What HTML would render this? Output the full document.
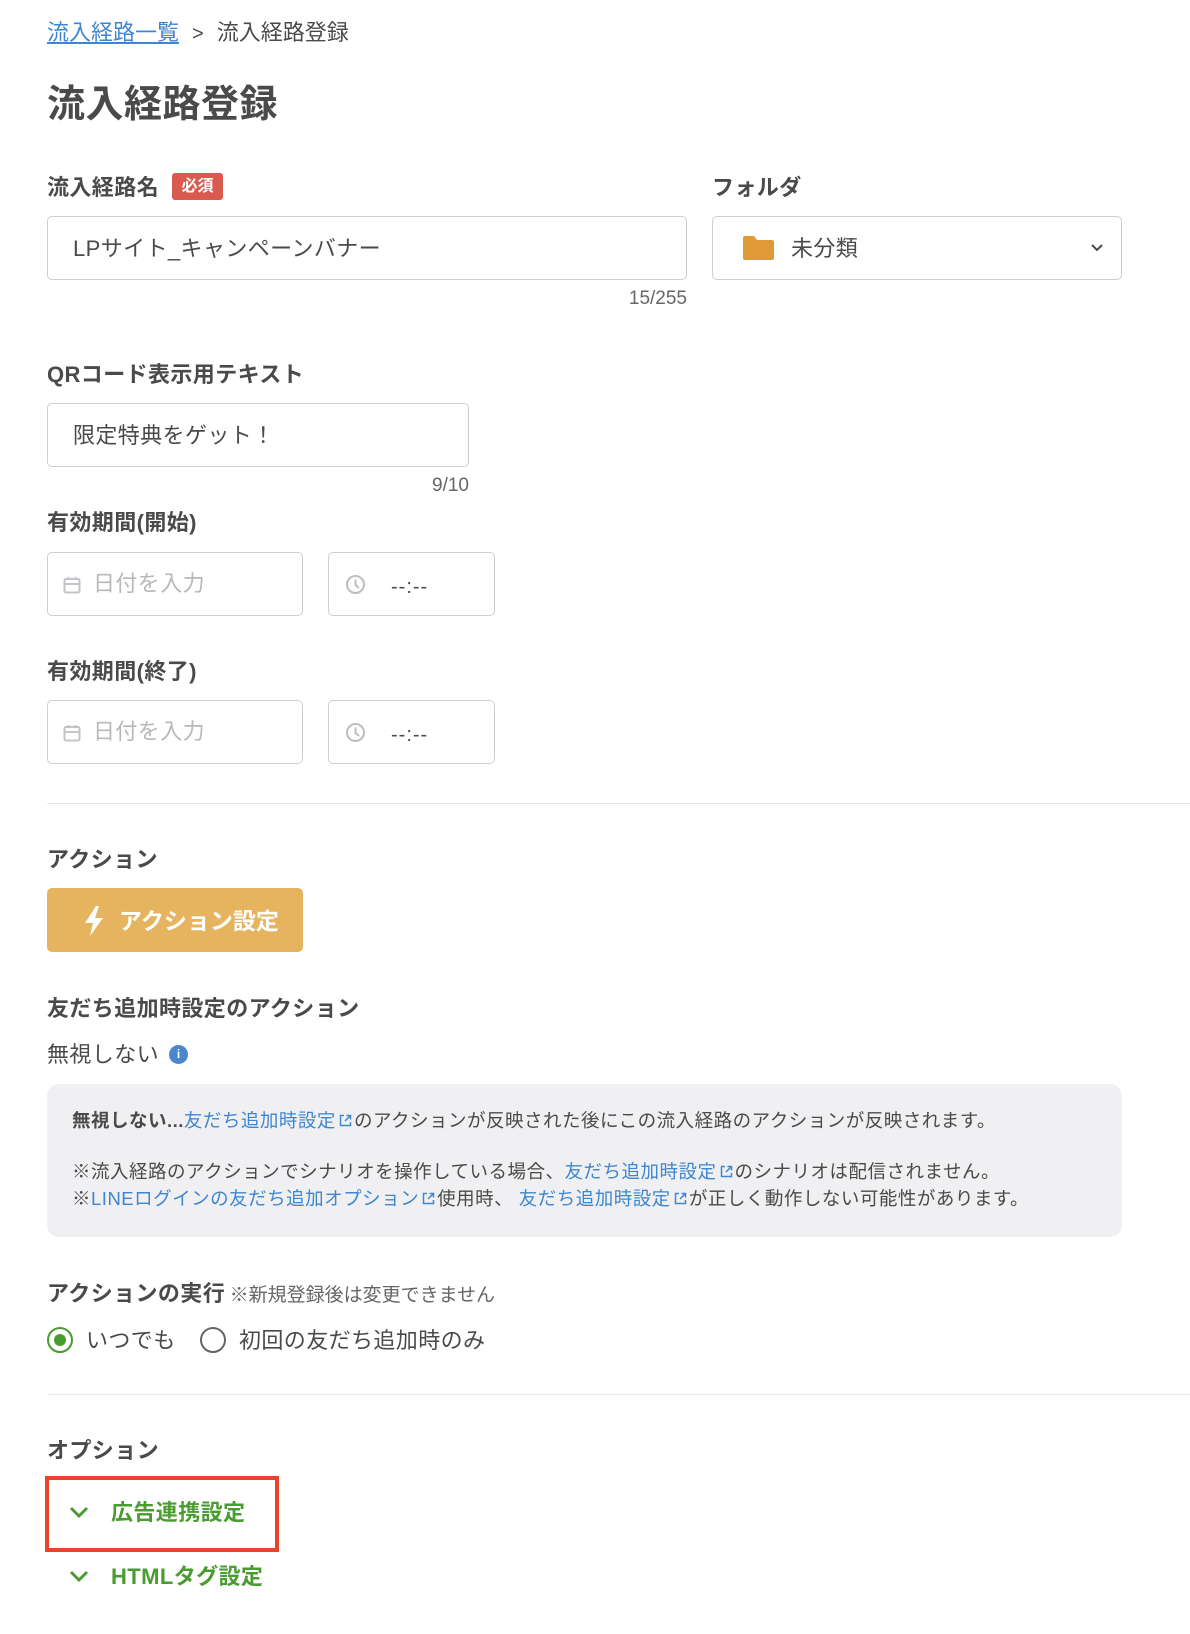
<!DOCTYPE html>
<html><head><meta charset="utf-8">
<style>
*{margin:0;padding:0;box-sizing:border-box}
body{width:1190px;height:1634px;background:#fff;position:relative;font-family:"Liberation Sans","Noto Sans CJK JP",sans-serif;color:#4a4a4a;overflow:hidden}
.a{position:absolute;white-space:nowrap}
.lbl{font-size:22px;font-weight:bold;color:#4a4a4a;letter-spacing:.4px}
.t{font-size:22px;letter-spacing:.4px}
.box{position:absolute;border:1px solid #cfcfd3;border-radius:5px;background:#fff}
.ph{color:#b8b8bd}
.link{color:#3f86d0}
.ext{display:inline-block;width:15px;height:15px;margin:0 1px 0 2px;vertical-align:-1px}
.hr{position:absolute;left:47px;right:0;height:1px;background:#e8e8ea}
.gb{font-size:18.5px;letter-spacing:.5px;line-height:26px}
</style></head><body>
<svg width="0" height="0" style="position:absolute"><defs><symbol id="ex" viewBox="0 0 15 15"><path d="M6 2.5H2.5v10h10V9" fill="none" stroke="#3f86d0" stroke-width="1.5"/><path d="M8.5 2.5h4v4M12.5 2.5L7 8" fill="none" stroke="#3f86d0" stroke-width="1.5"/></symbol></defs></svg>

<div class="a" style="left:47px;top:18px;font-size:22px;line-height:30px"><span class="link" style="text-decoration:underline">流入経路一覧</span><span style="margin:0 13px;color:#4a4a4a;font-size:20px">&gt;</span>流入経路登録</div>

<div class="a" style="left:47px;top:80px;font-size:38px;font-weight:bold;line-height:50px;color:#4a4a4a;letter-spacing:.5px">流入経路登録</div>

<div class="a lbl" style="left:47px;top:173px;line-height:30px">流入経路名</div>
<div class="a" style="left:172px;top:173px;width:51px;height:27px;background:#d95a4e;color:#fff;border-radius:3px;font-size:16px;font-weight:bold;text-align:center;line-height:27px">必須</div>
<div class="a lbl" style="left:712px;top:173px;line-height:30px">フォルダ</div>

<div class="box" style="left:47px;top:216px;width:640px;height:64px"></div>
<div class="a t" style="left:73px;top:234px;line-height:30px">LPサイト_キャンペーンバナー</div>
<div class="a" style="left:580px;top:286px;width:107px;text-align:right;font-size:19px;line-height:26px;color:#666">15/255</div>

<div class="box" style="left:712px;top:216px;width:410px;height:64px"></div>
<svg class="a" style="left:743px;top:235px" width="31" height="25" viewBox="0 0 31 25"><path d="M0 3a2 2 0 0 1 2-2h9l3 4h15a2 2 0 0 1 2 2v16a2 2 0 0 1-2 2H2a2 2 0 0 1-2-2z" fill="#e09a35"/></svg>
<div class="a t" style="left:791px;top:234px;line-height:30px">未分類</div>
<svg class="a" style="left:1090px;top:243px" width="14" height="10" viewBox="0 0 14 10"><path d="M2 2l5 5 5-5" fill="none" stroke="#4a4a4a" stroke-width="2"/></svg>

<div class="a lbl" style="left:47px;top:360px;line-height:30px">QRコード表示用テキスト</div>
<div class="box" style="left:47px;top:403px;width:422px;height:64px"></div>
<div class="a t" style="left:73px;top:421px;line-height:30px">限定特典をゲット！</div>
<div class="a" style="left:400px;top:473px;width:69px;text-align:right;font-size:19px;line-height:26px;color:#666">9/10</div>

<div class="a lbl" style="left:47px;top:508px;line-height:30px">有効期間(開始)</div>
<div class="box" style="left:47px;top:552px;width:256px;height:64px"></div>
<svg class="a" style="left:63px;top:576px" width="18" height="18" viewBox="0 0 18 18"><rect x="1.5" y="3" width="15" height="13.5" rx="1.5" fill="none" stroke="#c4c4c8" stroke-width="2"/><path d="M1.5 8h15M5.5 1v3M12.5 1v3" stroke="#c4c4c8" stroke-width="2"/></svg>
<div class="a ph t" style="left:93px;top:569px;line-height:30px">日付を入力</div>
<div class="box" style="left:328px;top:552px;width:167px;height:64px"></div>
<svg class="a" style="left:345px;top:574px" width="21" height="21" viewBox="0 0 21 21"><circle cx="10.5" cy="10.5" r="8.5" fill="none" stroke="#bdbdc2" stroke-width="2"/><path d="M10.5 5.5v5.5l3.5 3" fill="none" stroke="#bdbdc2" stroke-width="2"/></svg>
<div class="a" style="left:391px;top:572px;font-size:20px;line-height:30px;color:#4a4a4a;letter-spacing:1px">--:--</div>

<div class="a lbl" style="left:47px;top:657px;line-height:30px">有効期間(終了)</div>
<div class="box" style="left:47px;top:700px;width:256px;height:64px"></div>
<svg class="a" style="left:63px;top:724px" width="18" height="18" viewBox="0 0 18 18"><rect x="1.5" y="3" width="15" height="13.5" rx="1.5" fill="none" stroke="#c4c4c8" stroke-width="2"/><path d="M1.5 8h15M5.5 1v3M12.5 1v3" stroke="#c4c4c8" stroke-width="2"/></svg>
<div class="a ph t" style="left:93px;top:717px;line-height:30px">日付を入力</div>
<div class="box" style="left:328px;top:700px;width:167px;height:64px"></div>
<svg class="a" style="left:345px;top:722px" width="21" height="21" viewBox="0 0 21 21"><circle cx="10.5" cy="10.5" r="8.5" fill="none" stroke="#bdbdc2" stroke-width="2"/><path d="M10.5 5.5v5.5l3.5 3" fill="none" stroke="#bdbdc2" stroke-width="2"/></svg>
<div class="a" style="left:391px;top:720px;font-size:20px;line-height:30px;color:#4a4a4a;letter-spacing:1px">--:--</div>

<div class="hr" style="top:803px"></div>

<div class="a lbl" style="left:47px;top:845px;line-height:30px">アクション</div>
<div class="a" style="left:47px;top:888px;width:256px;height:64px;background:#e6b45e;border-radius:5px"></div>
<svg class="a" style="left:83px;top:905px" width="22" height="32" viewBox="0 0 22 32"><path d="M13 1L2 18h8l-3 13L20 13h-8l4-12z" fill="#fff"/></svg>
<div class="a" style="left:119px;top:906px;font-size:23px;font-weight:bold;color:#fff;line-height:30px">アクション設定</div>

<div class="a lbl" style="left:47px;top:994px;line-height:30px">友だち追加時設定のアクション</div>
<div class="a t" style="left:47px;top:1040px;line-height:30px">無視しない</div>
<div class="a" style="left:169px;top:1045px;width:19px;height:19px;border-radius:50%;background:#4a88cd;color:#fff;font-size:12px;font-weight:bold;text-align:center;line-height:19px">i</div>

<div class="a" style="left:47px;top:1084px;width:1075px;height:153px;background:#f0f0f2;border-radius:12px"></div>
<div class="a gb" style="left:72px;top:1108px"><b>無視しない...</b><span class="link">友だち追加時設定</span><svg class="ext"><use href="#ex"/></svg>のアクションが反映された後にこの流入経路のアクションが反映されます。</div>
<div class="a gb" style="left:72px;top:1159px">※流入経路のアクションでシナリオを操作している場合、<span class="link">友だち追加時設定</span><svg class="ext"><use href="#ex"/></svg>のシナリオは配信されません。</div>
<div class="a gb" style="left:72px;top:1186px">※<span class="link">LINEログインの友だち追加オプション</span><svg class="ext"><use href="#ex"/></svg>使用時、 <span class="link">友だち追加時設定</span><svg class="ext"><use href="#ex"/></svg>が正しく動作しない可能性があります。</div>

<div class="a" style="left:47px;top:1279px;line-height:30px"><span class="lbl">アクションの実行</span> <span style="font-size:19px;color:#666">※新規登録後は変更できません</span></div>

<div class="a" style="left:47px;top:1327px;width:26px;height:26px;border:2.5px solid #4a9c2f;border-radius:50%"></div>
<div class="a" style="left:54px;top:1334px;width:12px;height:12px;background:#4a9c2f;border-radius:50%"></div>
<div class="a t" style="left:86px;top:1326px;line-height:30px">いつでも</div>
<div class="a" style="left:200px;top:1327px;width:26px;height:26px;border:2px solid #666;border-radius:50%"></div>
<div class="a t" style="left:239px;top:1326px;line-height:30px">初回の友だち追加時のみ</div>

<div class="hr" style="top:1394px"></div>

<div class="a lbl" style="left:47px;top:1436px;line-height:30px">オプション</div>
<div class="a" style="left:45px;top:1476px;width:234px;height:76px;border:4px solid #e8442c"></div>
<svg class="a" style="left:69px;top:1505px" width="20" height="14" viewBox="0 0 20 14"><path d="M2 3l8 8 8-8" fill="none" stroke="#4a9c2f" stroke-width="3"/></svg>
<div class="a" style="left:111px;top:1498px;font-size:22px;font-weight:bold;color:#4a9c2f;line-height:30px;letter-spacing:.4px">広告連携設定</div>
<svg class="a" style="left:69px;top:1569px" width="20" height="14" viewBox="0 0 20 14"><path d="M2 3l8 8 8-8" fill="none" stroke="#4a9c2f" stroke-width="3"/></svg>
<div class="a" style="left:111px;top:1562px;font-size:22px;font-weight:bold;color:#4a9c2f;line-height:30px;letter-spacing:.4px">HTMLタグ設定</div>

</body></html>
